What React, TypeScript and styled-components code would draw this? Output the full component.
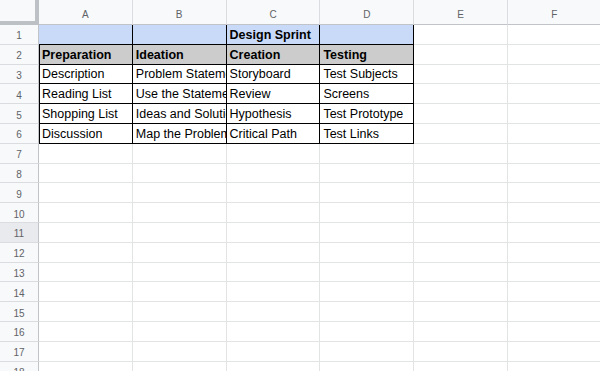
import styled, { createGlobalStyle, css } from "styled-components";

const GlobalStyle = createGlobalStyle`
  html, body {
    margin: 0;
    padding: 0;
    background: #fff;
    overflow: hidden;
  }
  * {
    box-sizing: border-box;
  }
`;

const Sheet = styled.div`
  display: grid;
  grid-template-columns: 39px repeat(6, 93.8px);
  grid-template-rows: 25px repeat(18, 19.8px);
  width: 600px;
  height: 371px;
  overflow: hidden;
  font-family: "Liberation Sans", Arial, sans-serif;
`;

const Corner = styled.div`
  background: #f8f9fa;
  border-right: 4px solid #bdc1c6;
  border-bottom: 4px solid #bdc1c6;
`;

const ColHead = styled.div`
  background: #f8f9fa;
  border-right: 1px solid #dadce0;
  border-bottom: 1px solid #c0c4c8;
  color: #5f6368;
  font-size: 10px;
  display: flex;
  align-items: center;
  justify-content: center;
  padding-top: 4px;
`;

const RowHead = styled.div<{ $active?: boolean }>`
  background: ${(p) => (p.$active ? "#e8eaed" : "#f8f9fa")};
  border-right: 1px solid #c0c4c8;
  border-bottom: 1px solid #dadce0;
  color: #5f6368;
  font-size: 10px;
  display: flex;
  align-items: center;
  justify-content: center;
  padding-top: 3px;
`;

type Fill = "blue" | "gray" | "none";

const Cell = styled.div<{ $fill?: Fill; $boxed?: boolean; $first?: boolean; $bold?: boolean }>`
  background: ${(p) =>
    p.$fill === "blue" ? "#c9daf8" : p.$fill === "gray" ? "#cccccc" : "#fff"};
  border-right: 1px solid #e2e3e3;
  border-bottom: 1px solid #e2e3e3;
  font-size: 12.5px;
  line-height: 15px;
  font-weight: ${(p) => (p.$bold ? 700 : 400)};
  color: #000;
  padding: 0 3px 1px;
  white-space: nowrap;
  overflow: hidden;
  display: flex;
  align-items: flex-end;
  ${(p) =>
    p.$boxed &&
    css`
      border-right-color: #000;
      border-bottom-color: #000;
    `}
  ${(p) =>
    p.$first &&
    css`
      border-left: 1px solid #000;
      padding-left: 2px;
    `}
`;

const columns = ["A", "B", "C", "D", "E", "F"];

const data: string[][] = [
  ["", "", "Design Sprint", ""],
  ["Preparation", "Ideation", "Creation", "Testing"],
  ["Description", "Problem Statement", "Storyboard", "Test Subjects"],
  ["Reading List", "Use the Statement", "Review", "Screens"],
  ["Shopping List", "Ideas and Solutions", "Hypothesis", "Test Prototype"],
  ["Discussion", "Map the Problem", "Critical Path", "Test Links"],
];

function App() {
  const rows = Array.from({ length: 18 }, (_, i) => i + 1);
  return (
    <>
      <GlobalStyle />
      <Sheet>
        <Corner />
        {columns.map((c) => (
          <ColHead key={c}>{c}</ColHead>
        ))}
        {rows.map((r) => {
          const values = data[r - 1];
          return [
            <RowHead key={`h${r}`} $active={r === 11}>
              {r}
            </RowHead>,
            ...columns.map((c, ci) => {
              const inTable = !!values && ci < 4;
              const text = inTable ? values[ci] : "";
              const fill: Fill = r === 1 && inTable ? "blue" : r === 2 && inTable ? "gray" : "none";
              return (
                <Cell
                  key={`${c}${r}`}
                  $fill={fill}
                  $boxed={inTable}
                  $first={inTable && ci === 0 && r > 1}
                  $bold={r <= 2}
                >
                  {text}
                </Cell>
              );
            }),
          ];
        })}
      </Sheet>
    </>
  );
}

export default App;
